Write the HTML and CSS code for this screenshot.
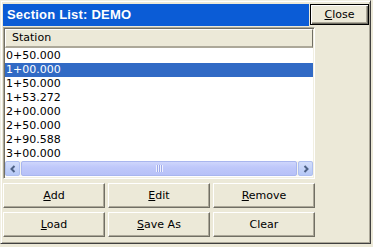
FILE: index.html
```html
<!DOCTYPE html>
<html>
<head>
  <title>Section List</title>
  <link rel="stylesheet" href="styles.css">
</head>
<body>
  <div class="window">
    <div class="top-row">
      <div class="title-bar">Section List: DEMO</div>
      <button class="button close-button"><u>C</u>lose</button>
    </div>

    <div class="main">
      <div class="list-box">
        <div class="list-header">Station</div>
        <div class="list-rows">
          <div class="list-row">0+50.000</div>
          <div class="list-row selected">1+00.000</div>
          <div class="list-row">1+50.000</div>
          <div class="list-row">1+53.272</div>
          <div class="list-row">2+00.000</div>
          <div class="list-row">2+50.000</div>
          <div class="list-row">2+90.588</div>
          <div class="list-row">3+00.000</div>
        </div>
        <div class="scrollbar">
          <div class="scroll-arrow">
            <svg width="8" height="8" viewBox="0 0 8 8"><path d="M5.5 1 L2.5 4 L5.5 7" fill="none" stroke="#4d6185" stroke-width="2"/></svg>
          </div>
          <div class="scroll-thumb">
            <span class="grip"></span>
          </div>
          <div class="scroll-arrow">
            <svg width="8" height="8" viewBox="0 0 8 8"><path d="M2.5 1 L5.5 4 L2.5 7" fill="none" stroke="#4d6185" stroke-width="2"/></svg>
          </div>
        </div>
      </div>

      <div class="button-grid">
        <button class="button"><u>A</u>dd</button>
        <button class="button"><u>E</u>dit</button>
        <button class="button"><u>R</u>emove</button>
        <button class="button"><u>L</u>oad</button>
        <button class="button"><u>S</u>ave As</button>
        <button class="button">Clear</button>
      </div>
    </div>
  </div>
</body>
</html>
```

FILE: styles.css
```css
body {
  margin: 0;
  background-color: #ece9d8;
  font-family: "DejaVu Sans", sans-serif;
  font-size: 11px;
}

.window {
  width: 371px;
  height: 244px;
  box-sizing: border-box;
  background-color: #ece9d8;
  border: 1px solid;
  border-color: #f1efe2 #404040 #404040 #f1efe2;
  box-shadow: inset 1px 1px #ffffff, inset -1px -1px #aca899;
  padding: 3px 1px 0 2px;
}

.top-row {
  display: flex;
  height: 22px;
}

.title-bar {
  flex: 1;
  background-color: #0b5cd6;
  color: #ffffff;
  font-family: "Liberation Sans", Arial, sans-serif;
  font-weight: bold;
  font-size: 13px;
  line-height: 22px;
  padding-left: 4px;
  letter-spacing: 0.2px;
}

.main {
  width: 312px;
  margin-top: 1px;
}

.list-box {
  height: 152px;
  box-sizing: border-box;
  border: 1px solid;
  border-color: #aca899 #ffffff #ffffff #aca899;
  box-shadow: inset 1px 1px #716f64, inset -1px -1px #f1efe2;
  background-color: #ffffff;
  padding: 1px;
  display: flex;
  flex-direction: column;
}

.list-header {
  height: 19px;
  box-sizing: border-box;
  background-color: #ece9d8;
  border-top: 1px solid #ffffff;
  border-left: 1px solid #ffffff;
  border-bottom: 2px solid #aca899;
  border-right: 1px solid #716f64;
  line-height: 16px;
  padding-left: 6px;
  color: #000000;
}

.list-rows {
  flex: 1;
  padding-top: 1px;
}

.list-row {
  height: 14px;
  line-height: 14px;
  padding-left: 1px;
  color: #000000;
}

.list-row.selected {
  background-color: #316ac5;
  color: #ffffff;
}

.scrollbar {
  height: 16px;
  display: flex;
  gap: 1px;
  background-color: #f4f3ee;
  margin-bottom: 1px;
}

.scroll-arrow {
  width: 15px;
  box-sizing: border-box;
  border: 1px solid #aebff0;
  border-radius: 2px;
  background: linear-gradient(to bottom, #d3defb, #b6c8f6);
  display: flex;
  align-items: center;
  justify-content: center;
}

.scroll-thumb {
  flex: 1;
  box-sizing: border-box;
  border: 1px solid #a9b6ee;
  border-radius: 2px;
  background: linear-gradient(to bottom, #cfd6fc 0%, #bfc8fa 40%, #b7c1f8 100%);
  display: flex;
  align-items: center;
  justify-content: center;
}

.grip {
  width: 7px;
  height: 7px;
  background: repeating-linear-gradient(to right, #eef0fe 0, #eef0fe 1px, #9eaaea 1px, #9eaaea 2px);
}

.button-grid {
  display: grid;
  grid-template-columns: repeat(3, 102px);
  grid-template-rows: repeat(2, 25px);
  column-gap: 3px;
  row-gap: 4px;
  margin-top: 4px;
}

.button {
  font-family: "DejaVu Sans", sans-serif;
  font-size: 11px;
  color: #000000;
  background-color: #ece9d8;
  border: 1px solid;
  border-color: #ffffff #716f64 #716f64 #ffffff;
  box-shadow: inset -1px -1px #aca899;
  padding: 0;
  margin: 0;
  text-align: center;
}

.close-button {
  width: 59px;
  height: 21px;
  margin-left: 1px;
  border: 1px solid #000000;
  box-shadow: inset 1px 1px #ffffff, inset -1px -1px #716f64, inset -2px -2px #aca899;
}
```
